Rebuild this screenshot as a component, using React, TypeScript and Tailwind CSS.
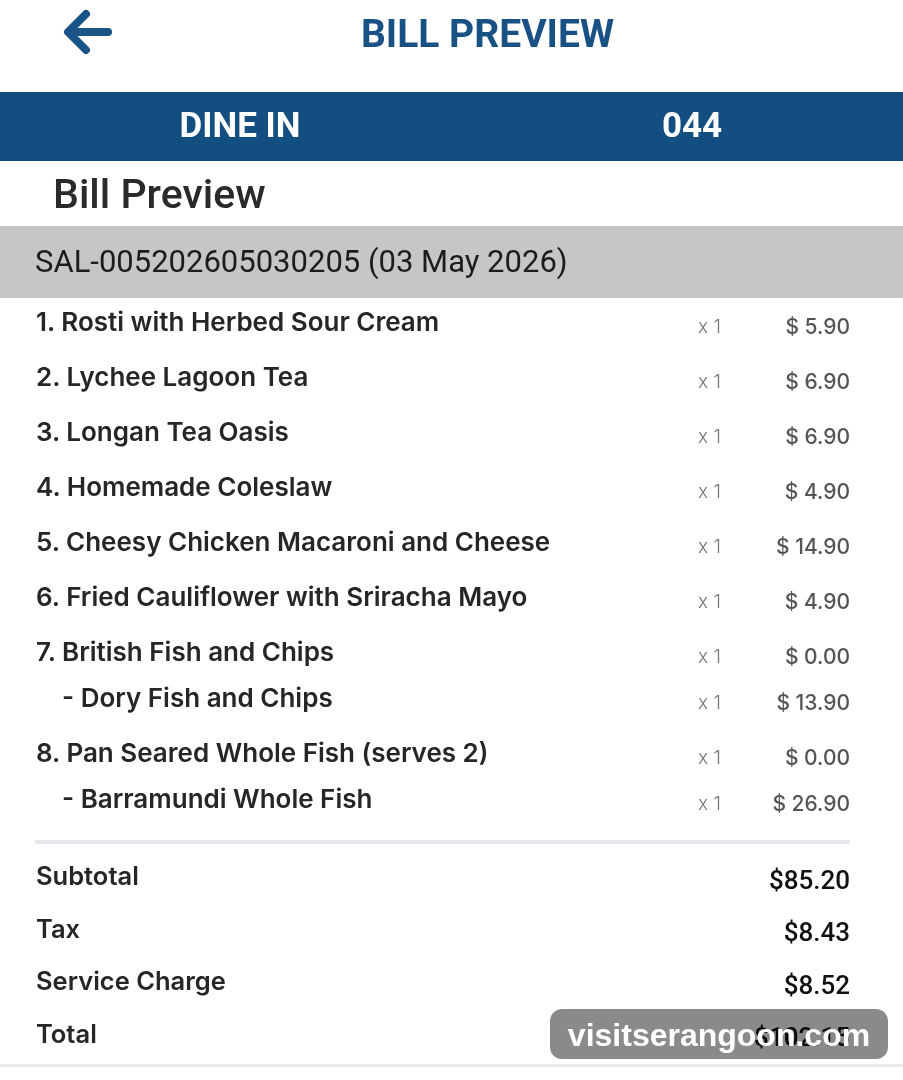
import React from "react";

interface BillLine {
  name: string;
  qty: number;
  price: string;
  sub?: { name: string; qty: number; price: string }[];
}

const lines: BillLine[] = [
  { name: "1. Rosti with Herbed Sour Cream", qty: 1, price: "$ 5.90" },
  { name: "2. Lychee Lagoon Tea", qty: 1, price: "$ 6.90" },
  { name: "3. Longan Tea Oasis", qty: 1, price: "$ 6.90" },
  { name: "4. Homemade Coleslaw", qty: 1, price: "$ 4.90" },
  { name: "5. Cheesy Chicken Macaroni and Cheese", qty: 1, price: "$ 14.90" },
  { name: "6. Fried Cauliflower with Sriracha Mayo", qty: 1, price: "$ 4.90" },
  {
    name: "7. British Fish and Chips",
    qty: 1,
    price: "$ 0.00",
    sub: [{ name: "- Dory Fish and Chips", qty: 1, price: "$ 13.90" }],
  },
  {
    name: "8. Pan Seared Whole Fish (serves 2)",
    qty: 1,
    price: "$ 0.00",
    sub: [{ name: "- Barramundi Whole Fish", qty: 1, price: "$ 26.90" }],
  },
];

const totals = [
  { label: "Subtotal", value: "$85.20" },
  { label: "Tax", value: "$8.43" },
  { label: "Service Charge", value: "$8.52" },
  { label: "Total", value: "$102.15" },
];

const Row = ({
  name,
  qty,
  price,
  indent,
}: {
  name: string;
  qty: number;
  price: string;
  indent?: boolean;
}) => (
  <div className="flex h-[46px] items-center pl-[36px] pr-[53px] font-['Inter',sans-serif]">
    <p
      className={`flex-1 text-[26px] font-semibold text-[#262626] ${
        indent ? "pl-[26px]" : ""
      }`}
    >
      {name}
    </p>
    <span className="mt-[12px] w-[60px] text-[19px] font-light text-[#777]">
      x {qty}
    </span>
    <span className="mt-[12px] w-[92px] text-right text-[21px] font-medium text-[#555]">
      {price}
    </span>
  </div>
);

export default function App() {
  return (
    <div className="relative w-[903px] h-[1080px] bg-white overflow-hidden font-['Roboto',sans-serif]">
      <div className="flex h-[92px] items-start">
        <div className="w-[150px] pl-[62px] pt-[9px]">
          <svg width="51" height="46" viewBox="0 0 51 46" fill="none">
            <path
              d="M46 23H7M24 5L6 23L24 41"
              stroke="#1a5386"
              strokeWidth="8"
              strokeLinecap="round"
              strokeLinejoin="round"
            />
          </svg>
        </div>
        <h1 className="flex-1 pr-[78px] pt-[5px] text-center text-[39px] font-bold text-[#1a5184]">
          BILL PREVIEW
        </h1>
      </div>

      <div className="grid h-[69px] grid-cols-[452px_452px] items-center bg-[#134e80] pl-[14px] text-[35px] font-bold text-white">
        <span className="text-center">DINE IN</span>
        <span className="text-center">044</span>
      </div>

      <div className="flex h-[65px] items-center pl-[53px] pt-[2px] text-[41px] font-medium text-[#2a2a2a]">
        Bill Preview
      </div>

      <div className="flex h-[72px] items-center bg-[#c6c6c6] pl-[35px] text-[31px] text-[#1c1c1c]">
        SAL-005202605030205 (03 May 2026)
      </div>

      <div className="flex flex-col gap-[9px]">
        {lines.map((line) => (
          <div key={line.name} className="flex flex-col">
            <Row name={line.name} qty={line.qty} price={line.price} />
            {line.sub?.map((s) => (
              <Row key={s.name} name={s.name} qty={s.qty} price={s.price} indent />
            ))}
          </div>
        ))}
      </div>

      <div className="mx-[35px] mt-[19px] w-[815px] h-[4px] bg-[#e6e6ec]" />

      <div className="flex flex-col pl-[36px] pr-[53px] pt-[6px]">
        {totals.map((t) => (
          <div key={t.label} className="flex h-[52.5px] items-center justify-between">
            <span className="text-[25.5px] font-semibold text-[#262626] font-['Inter',sans-serif]">
              {t.label}
            </span>
            <span className="mt-[8px] text-[26px] font-medium text-[#111]">{t.value}</span>
          </div>
        ))}
      </div>

      <div className="mt-[4px] h-[3px] w-full bg-[#ececec]" />

      <div className="absolute left-[550px] top-[1009px] flex h-[50px] w-[338px] items-center justify-center">
        <div className="absolute inset-0 rounded-[12px] bg-[#8a8a8a] mix-blend-multiply" />
        <span className="relative pt-[2px] text-[32px] font-bold text-white font-['Liberation_Sans',sans-serif]">
          visitserangoon.com
        </span>
      </div>
    </div>
  );
}
